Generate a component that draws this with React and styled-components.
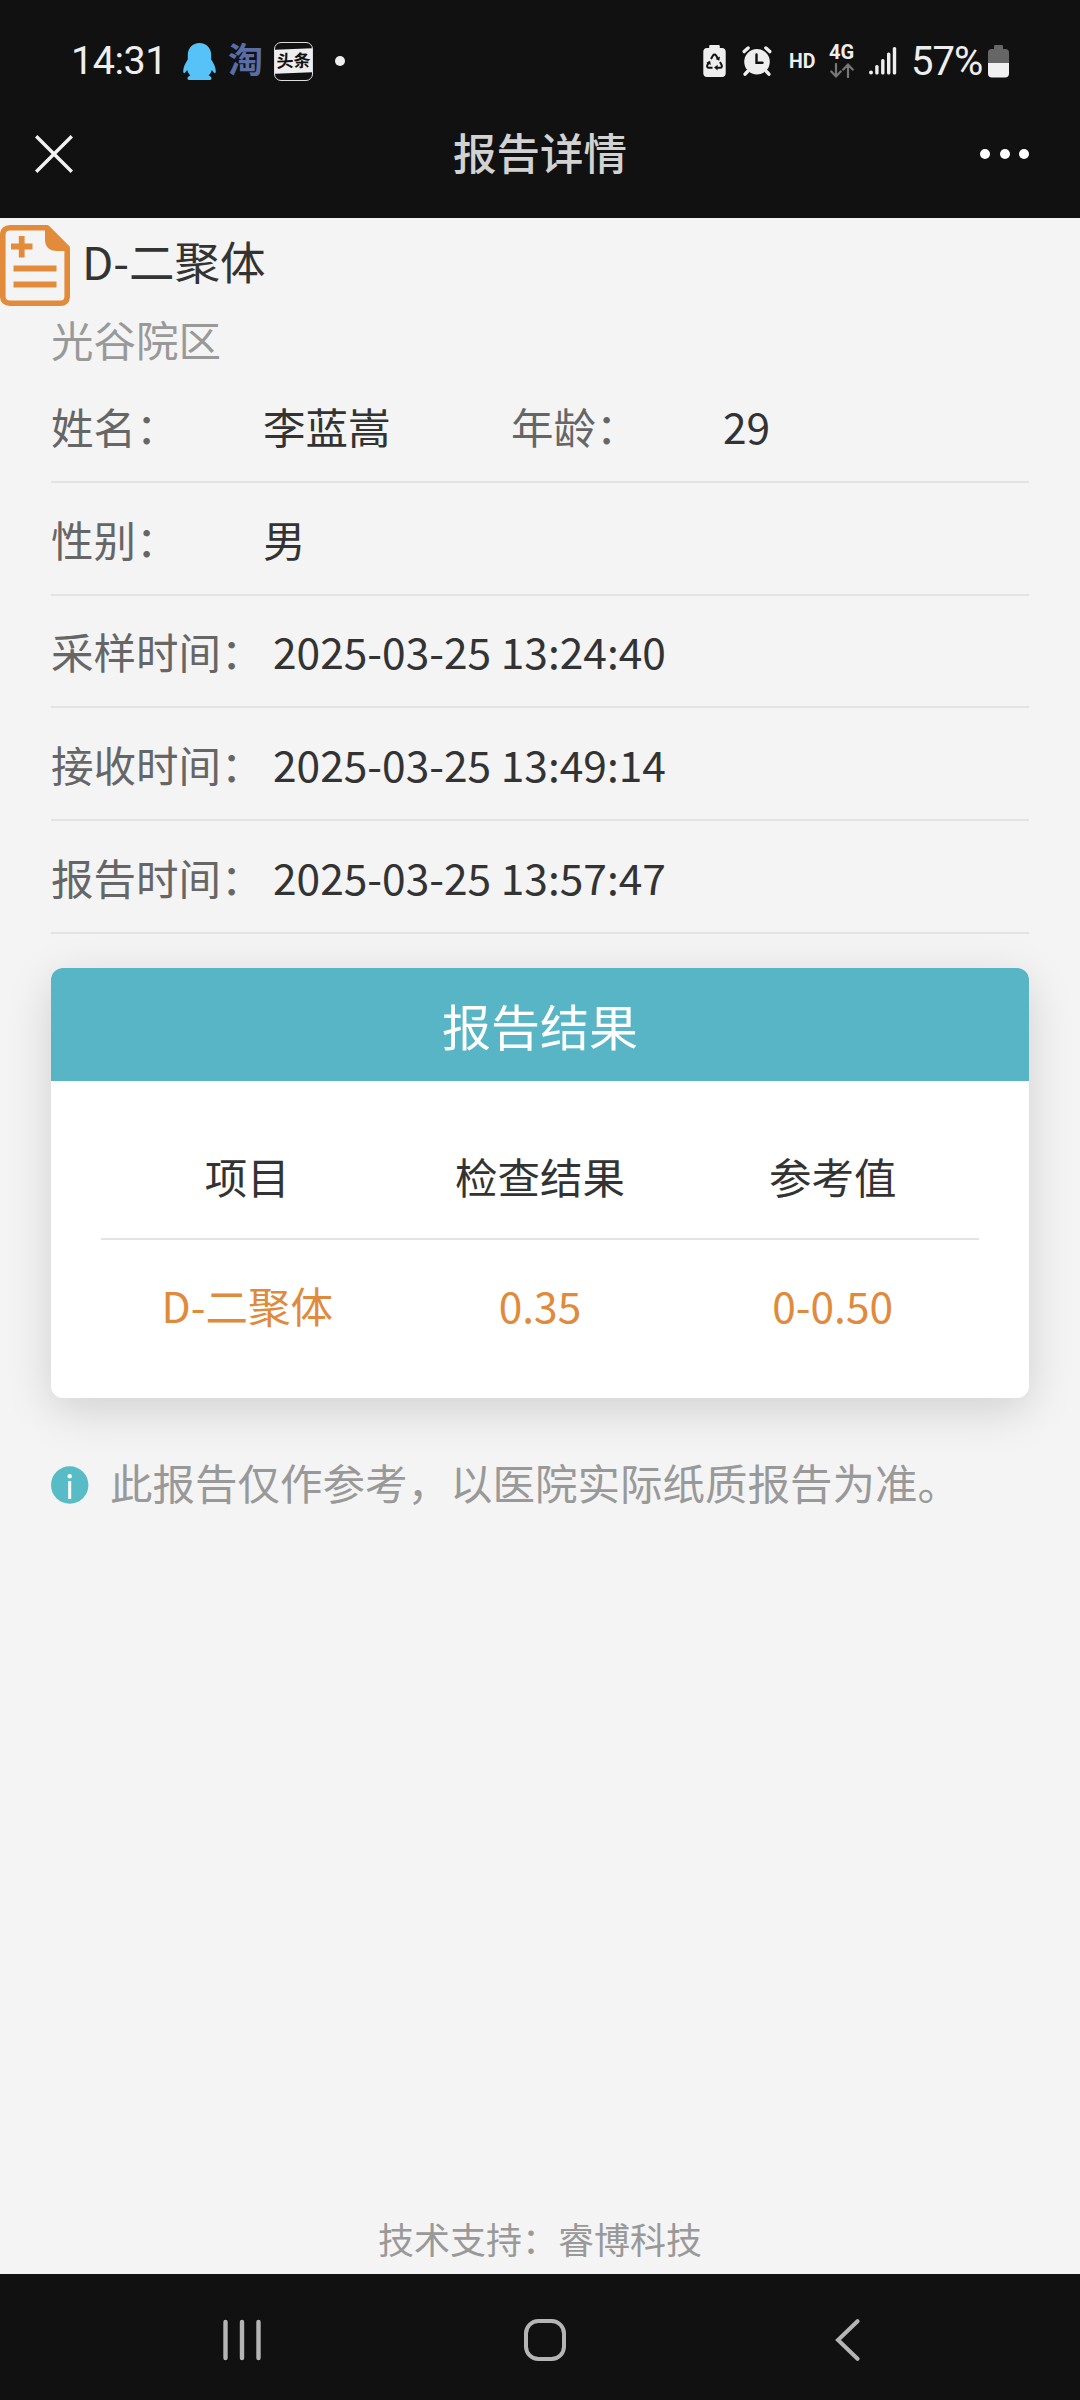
import React from "react";
import styled, { createGlobalStyle } from "styled-components";

const info = [
  [
    { label: "姓名：", value: "李蓝嵩" },
    { label: "年龄：", value: "29" },
  ],
  [{ label: "性别：", value: "男" }],
  [{ label: "采样时间：", value: "2025-03-25 13:24:40", wide: true }],
  [{ label: "接收时间：", value: "2025-03-25 13:49:14", wide: true }],
  [{ label: "报告时间：", value: "2025-03-25 13:57:47", wide: true }],
];

const results = [{ name: "D-二聚体", value: "0.35", range: "0-0.50" }];

const QQIcon = () => (
  <svg width="33" height="37" viewBox="0 0 33 37">
    <path
      fill="#57c2f7"
      d="M16.5 0C9.5 0 4.8 5 4.8 12v4.5C2.500 20 .3 24 .2 28c0 2.200.900 2.700 2 1.500l2-2.500c.5 2.200 1.600 4 3.200 5.600-1.900.7-2.900 1.600-2.900 2.800 0 1.200 1 1.600 3 1.600h18c2 0 3-.4 3-1.600 0-1.200-1-2.100-2.900-2.800 1.600-1.600 2.700-3.400 3.200-5.600l2 2.500c1.100 1.200 2 .7 2-1.500-.1-4-2.300-8-4.600-11.500V12C28.200 5 23.500 0 16.500 0z"
    />
  </svg>
);

const SaverIcon = () => (
  <svg width="23" height="33" viewBox="0 0 23 33">
    <path
      fill="#eee"
      d="M7.500 0h8c.8 0 1.300.5 1.300 1.300V3H19c2.300 0 3.700 1.400 3.700 3.700v21.600c0 2.300-1.400 3.700-3.700 3.700H4C1.700 32 .3 30.600.3 28.300V6.700C.3 4.400 1.700 3 4 3h2.200V1.300C6.200.5 6.700 0 7.500 0z"
    />
    <g fill="none" stroke="#111" strokeWidth="2" strokeLinejoin="round">
      <path d="M8 14l2-3.600c.8-1.300 2.200-1.300 3 0l2 3.200" />
      <path d="M17 17l1.700 3.200c.6 1.400-.1 2.600-1.600 2.600h-3.600" />
      <path d="M9.500 22.800H5.900c-1.500 0-2.200-1.200-1.600-2.600L6 17" />
    </g>
    <path fill="#111" d="M16.900 11.500l-.6 4.300-3.700-1.900zM14.600 19.800v5.600l-3.500-2.800zM3.300 17.700l3.800-2 .7 4.200z" />
  </svg>
);

const AlarmIcon = () => (
  <svg width="30" height="30" viewBox="0 0 30 30">
    <circle cx="15" cy="15.800" r="12.800" fill="#eee" />
    <g stroke="#eee" strokeWidth="3.400" strokeLinecap="round">
      <path d="M2.200 5.600l3.900-3.600M27.800 5.600L23.900 2M5.500 25.500l-2.400 2.700M24.500 25.500l2.400 2.700" />
    </g>
    <path d="M14.500 8.500v8.300h6" fill="none" stroke="#111" strokeWidth="2.400" strokeLinecap="round" />
  </svg>
);

const ArrowsIcon = () => (
  <svg width="24" height="15" viewBox="0 0 24 15" fill="none" stroke="#777" strokeWidth="2.200" strokeLinecap="round">
    <path d="M6 1v12M1.300 8.500L6 13.400l4.700-4.900M18 14V2M13.300 6.600L18 1.600l4.700 5" />
  </svg>
);

const SignalIcon = () => (
  <svg width="28" height="28" viewBox="0 0 28 28" fill="#eee">
    <rect x="0" y="23.500" width="4" height="4" rx="2" />
    <rect x="6.200" y="18" width="3.400" height="9.500" rx="1.500" />
    <rect x="12.100" y="12" width="3.400" height="15.500" rx="1.500" />
    <rect x="18" y="5.500" width="3.400" height="22" rx="1.500" />
    <rect x="23.800" y="0" width="3.400" height="27.500" rx="1.500" />
  </svg>
);

const BatteryIcon = () => (
  <svg width="21" height="33" viewBox="0 0 21 33">
    <path
      fill="#666"
      d="M7.500 0h6c1 0 1.500.5 1.500 1.400V4h2.500C19.700 4 21 5.400 21 7.600V18H0V7.600C0 5.400 1.300 4 3.500 4H6V1.400C6 .5 6.500 0 7.500 0z"
    />
    <path fill="#f0f0f0" d="M0 18h21v10.500c0 2.700-1.400 4-4 4H4c-2.600 0-4-1.300-4-4z" />
  </svg>
);

const CloseIcon = () => (
  <svg width="38" height="38" viewBox="0 0 38 38" stroke="#f2f2f2" strokeWidth="3.400">
    <path d="M1.200 1.200l35.600 35.600M36.800 1.200L1.200 36.800" />
  </svg>
);

const DocIcon = () => (
  <svg width="70" height="81" viewBox="0 0 70 81">
    <path
      fill="none"
      stroke="#e28b3b"
      strokeWidth="5.600"
      strokeLinejoin="round"
      d="M10 2.800h37L67.200 23v48.700c0 4-2.500 6.500-6.500 6.500H10c-4.500 0-7.200-2.500-7.200-6.500V9.800c0-4.500 3-7 7.200-7z"
    />
    <path fill="#e28b3b" d="M45 2h4l19 19v5H57c-8 0-12-4-12-12z" />
    <path
      fill="none"
      stroke="#e28b3b"
      strokeWidth="5.800"
      d="M11 21.500h21.500M21.700 11v21.500M13.500 43.500h43M13.500 59.500h43"
    />
  </svg>
);

const InfoIcon = () => (
  <svg width="38" height="38" viewBox="0 0 38 38">
    <circle cx="18.700" cy="19" r="18.700" fill="#58bcc7" />
    <circle cx="18.700" cy="10.300" r="2.200" fill="#fff" />
    <rect x="17.200" y="15" width="3" height="18" fill="#fff" />
  </svg>
);

export default function App() {
  return (
    <Screen>
      <GlobalStyle />
      <StatusBar>
        <StatusLeft>
          <Clock>14:31</Clock>
          <QQIcon />
          <TaoBadge>淘</TaoBadge>
          <NewsBadge>
            <span>头条</span>
          </NewsBadge>
          <MoreDot />
        </StatusLeft>
        <StatusRight>
          <PowerIcons>
            <SaverIcon />
            <AlarmIcon />
          </PowerIcons>
          <Hd>HD</Hd>
          <Network>
            <span>4G</span>
            <ArrowsIcon />
          </Network>
          <SignalIcon />
          <Percent>57%</Percent>
          <BatteryIcon />
        </StatusRight>
      </StatusBar>

      <NavHeader>
        <CloseIcon />
        <h1>报告详情</h1>
        <Dots>
          <i />
          <i />
          <i />
        </Dots>
      </NavHeader>

      <Content>
        <ReportTitle>
          <DocIcon />
          <h2>D-二聚体</h2>
        </ReportTitle>
        <Campus>光谷院区</Campus>

        <InfoList>
          {info.map((row) => (
            <InfoRow key={row[0].label}>
              {row.map((item) => (
                <InfoItem key={item.label}>
                  <Label $wide={item.wide}>{item.label}</Label>
                  <span>{item.value}</span>
                </InfoItem>
              ))}
            </InfoRow>
          ))}
        </InfoList>

        <Card>
          <CardHeader>报告结果</CardHeader>
          <Table>
            <TableHead>
              <span>项目</span>
              <span>检查结果</span>
              <span>参考值</span>
            </TableHead>
            {results.map((item) => (
              <TableRow key={item.name}>
                <span>{item.name}</span>
                <span>{item.value}</span>
                <span>{item.range}</span>
              </TableRow>
            ))}
          </Table>
        </Card>

        <Notice>
          <InfoIcon />
          <p>此报告仅作参考，以医院实际纸质报告为准。</p>
        </Notice>

        <Support>技术支持：睿博科技</Support>
      </Content>

      <SystemNav>
        <NavKey>
          <svg width="38" height="42" viewBox="0 0 38 42" stroke="#b5b5b5" strokeWidth="4.400" strokeLinecap="round">
            <path d="M2.500 3v36M19 3v36M35.500 3v36" />
          </svg>
        </NavKey>
        <NavKey>
          <svg width="42" height="42" viewBox="0 0 42 42" fill="none" stroke="#b5b5b5" strokeWidth="4">
            <rect x="2" y="2" width="38" height="38" rx="12.500" />
          </svg>
        </NavKey>
        <NavKey>
          <svg width="25" height="42" viewBox="0 0 25 42" fill="none" stroke="#b5b5b5" strokeWidth="4" strokeLinecap="round">
            <path d="M22.500 2.200L3 21l19.500 18.800" />
          </svg>
        </NavKey>
      </SystemNav>
    </Screen>
  );
}

const GlobalStyle = createGlobalStyle`
* {
  box-sizing: border-box;
}
body {
  margin: 0;
  background: #f4f4f4;
}
h1, h2, p {
  margin: 0;
  font-weight: 400;
}
svg {
  display: block;
  flex-shrink: 0;
}
`;

const Screen = styled.div`
  display: flex;
  flex-direction: column;
  width: 1080px;
  height: 2400px;
  overflow: hidden;
  background: #f4f4f4;
  color: #333;
  font-family: "Noto Sans CJK SC", sans-serif;
  font-size: 42.500px;
`;

const StatusBar = styled.div`
  display: flex;
  justify-content: space-between;
  height: 110px;
  padding: 12px 71px 0 71px;
  background: #111;
  color: #eee;
  font-family: Roboto, "Noto Sans CJK SC", sans-serif;
`;

const StatusLeft = styled.div`
  display: flex;
  align-items: center;
`;

const StatusRight = styled.div`
  display: flex;
  align-items: center;
`;

const PowerIcons = styled.div`
  display: flex;
  align-items: center;
  gap: 16px;
`;

const Clock = styled.span`
  width: 112px;
  font-size: 39.500px;
  letter-spacing: -0.500px;
  line-height: 44px;
`;

const TaoBadge = styled.span`
  margin-left: 12px;
  padding-top: 2px;
  width: 35px;
  color: #5a6ea3;
  font-size: 35px;
  font-weight: 700;
  line-height: 40px;
`;

const NewsBadge = styled.span`
  display: flex;
  align-items: center;
  width: 39px;
  height: 39px;
  margin-left: 11px;
  border: 1.500px solid #ddd;
  border-radius: 7px;

  span {
    width: 100%;
    background: #eee;
    color: #111;
    font-size: 17px;
    font-weight: 700;
    line-height: 24px;
    text-align: center;
    transform: skewY(-2deg);
  }
`;

const MoreDot = styled.span`
  width: 10px;
  height: 10px;
  margin-left: 22px;
  border-radius: 50%;
  background: #eee;
`;

const Hd = styled.span`
  width: 26px;
  margin: 0 14px 0 17px;
  font-size: 19.500px;
  font-weight: 700;
`;

const Network = styled.div`
  display: flex;
  flex-direction: column;
  align-items: center;
  gap: 3px;
  width: 25px;
  margin-right: 15px;

  span {
    font-size: 20px;
    font-weight: 700;
    line-height: 16px;
  }
`;

const Percent = styled.span`
  width: 77px;
  margin-left: 14px;
  font-size: 40px;
  letter-spacing: -1px;
`;

const NavHeader = styled.header`
  display: grid;
  grid-template-columns: 1fr auto 1fr;
  align-items: center;
  height: 108px;
  padding: 0 50px 21px 35px;
  background: #111;
  color: #d2d2d2;

  h1 {
    padding: 0 0 3px 15px;
    font-size: 43.500px;
    font-weight: 500;
    line-height: 60px;
  }
`;

const Dots = styled.div`
  display: flex;
  justify-self: end;
  gap: 9.500px;
  margin-right: 1px;

  i {
    width: 10px;
    height: 10px;
    border-radius: 50%;
    background: #fff;
  }
`;

const Content = styled.main`
  flex: 1;
  display: flex;
  flex-direction: column;
  padding-top: 7px;
`;

const ReportTitle = styled.div`
  display: flex;
  gap: 12px;
  height: 81px;

  h2 {
    font-size: 45.500px;
    line-height: 70px;
  }
`;

const Campus = styled.div`
  height: 64px;
  padding: 0 51px;
  color: #999;
  line-height: 65px;
`;

const InfoList = styled.div`
  margin: 0 51px;
`;

const InfoRow = styled.div`
  display: flex;
  height: 112.750px;
  border-bottom: 2px solid #e3e3e3;
`;

const InfoItem = styled.div`
  display: flex;
  align-items: center;
  width: 460px;
  white-space: nowrap;
`;

const Label = styled.span`
  flex-shrink: 0;
  width: ${(props) => (props.$wide ? "222px" : "212px")};
  color: #666;
`;

const Card = styled.section`
  margin: 34px 51px 0;
  overflow: hidden;
  border-radius: 12px;
  background: #fff;
  box-shadow: 0 12px 46px rgba(0, 0, 0, 0.15);
`;

const CardHeader = styled.div`
  height: 113px;
  background: #57b5c5;
  color: #fff;
  font-size: 49px;
  line-height: 114px;
  text-align: center;
`;

const Table = styled.div`
  height: 317px;
  padding: 35px 50px 0;
`;

const TableRow = styled.div`
  display: grid;
  grid-template-columns: repeat(3, 1fr);
  height: 131px;
  color: #e08a3c;
  line-height: 130px;
  text-align: center;
`;

const TableHead = styled(TableRow)`
  height: 124px;
  border-bottom: 2px solid #e3e3e3;
  color: #333;
  line-height: 119px;
`;

const Notice = styled.div`
  display: flex;
  align-items: center;
  gap: 21px;
  margin: 55px 51px 0;
  color: #999;

  p {
    padding-bottom: 6px;
    line-height: 58px;
    white-space: nowrap;
  }
`;

const Support = styled.footer`
  margin-top: auto;
  padding-bottom: 9px;
  color: #999;
  font-size: 36px;
  line-height: 54px;
  text-align: center;
`;

const SystemNav = styled.nav`
  display: flex;
  align-items: center;
  justify-content: space-between;
  height: 126px;
  padding: 5px 212px 0 221px;
  background: #111;
`;

const NavKey = styled.div`
  display: flex;
  justify-content: center;
  width: 42px;
`;
